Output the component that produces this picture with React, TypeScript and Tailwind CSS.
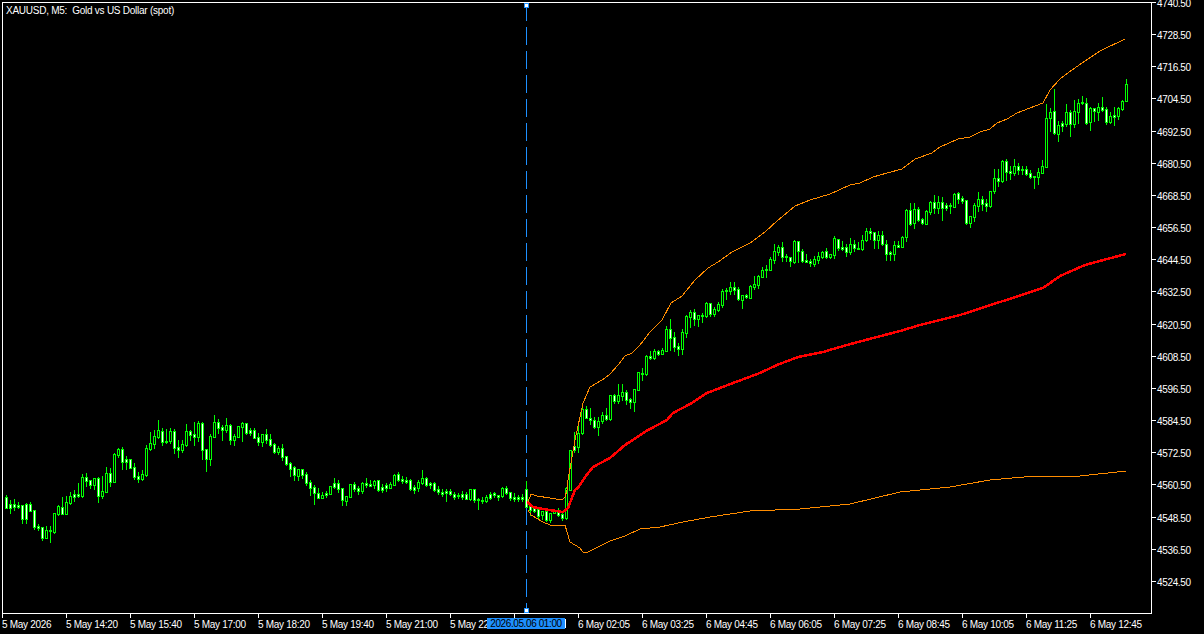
// MT5 style XAUUSD M5 chart: candles, one moving average and two envelope lines
// candle rows are [bodyTop, bodyBottom, wickTop, wickBottom, bearish] read off 3x crops, base + v / 3 = page y
type Row = [number, number, number, number, number];

const segments: { base: number; rows: Row[] }[] = [
  {
    base: 400,
    rows: [
      [292,323,285,323,1],[312,323,300,338,1],[312,320,297,330,1],[314,320,306,324,1],[316,356,316,368,1],[312,356,309,368,1],[312,332,306,332,1],[331,380,331,386,1],
      [378,384,372,390,1],[382,414,380,420,1],[390,414,378,414,0],[390,394,378,426,1],[340,396,340,399,0],[318,342,315,345,0],[320,341,291,341,1],[306,341,288,341,0],
      [288,308,276,312,0],[282,290,270,303,1],[282,288,249,290,1],[232,288,222,290,0],[232,242,219,258,1],[241,254,241,264,1],[235,255,235,267,0],[233,287,231,305,1],
      [274,288,228,294,0],[220,275,201,275,0],[220,246,204,258,1],[162,245,159,245,0],[148,164,144,170,0],[148,185,141,207,1],[178,185,168,207,1],[178,205,178,205,1],
      [202,230,189,237,1],[229,236,216,246,1],[223,237,210,240,0],[145,225,135,228,0],[130,148,96,151,0],[108,133,90,144,0],[91,112,60,115,0],[92,125,84,135,1],
      [123,127,87,129,1],[94,123,84,129,0],[94,143,87,159,1],[142,150,120,171,1],[133,150,120,156,0],[94,135,72,138,0],[94,104,90,120,1],[103,110,66,135,1],
      [70,110,63,123,0],[70,150,66,177,1],[148,177,148,213,1],[108,177,102,195,0],[67,110,45,110,0],[67,83,57,99,1],[82,90,75,120,1],[76,91,54,97,0],
      [76,120,72,132,1],[108,120,102,135,0],[79,112,79,112,0],[70,80,66,123,0],[70,99,69,102,1],[91,99,84,105,1],[91,113,84,113,1],[112,125,99,135,1],
      [102,126,102,138,0],[103,120,87,129,1],[118,134,102,138,1],[132,157,129,159,1],[145,157,138,162,0],[145,171,132,180,1],[169,192,169,195,1],[190,207,186,228,1],
      [202,225,198,240,1],[208,227,208,240,0],
    ],
  },
  {
    base: 450,
    rows: [
      [58,75,58,84,1],[72,98,66,105,1],[96,114,90,135,1],[112,129,105,162,1],[129,143,114,144,1],[135,143,126,144,0],[128,135,123,142,1],[108,132,108,132,0],
      [100,112,84,114,1],[100,116,90,126,1],[114,151,114,165,1],[139,153,139,165,0],[103,141,103,141,0],[102,117,96,123,1],[114,122,108,132,1],[99,124,96,129,0],
      [100,105,84,111,1],[103,108,90,108,1],[93,105,90,114,0],[91,119,90,123,1],[111,119,102,126,1],[105,113,99,123,1],[102,114,96,114,0],[76,105,72,105,0],
      [73,91,66,93,1],[88,94,78,99,1],[90,95,81,99,1],[90,118,87,120,1],[112,120,105,129,1],[96,113,90,123,0],[84,99,60,102,0],[84,104,81,108,1],
      [99,105,96,114,1],[99,120,96,123,1],[118,127,108,132,1],[126,132,117,138,1],[123,130,117,153,1],[122,133,117,135,1],[132,141,126,147,1],[135,138,129,144,1],
      [132,141,123,147,1],[133,146,126,147,1],[118,147,118,150,0],[118,150,117,156,1],[147,150,144,177,1],[149,153,141,159,1],[141,153,135,156,0],[132,143,126,147,1],
      [130,135,126,141,1],[136,141,135,150,1],[114,139,111,141,0],[115,129,108,132,1],[127,144,126,150,1],[140,148,129,153,1],[140,148,135,153,1],[140,148,132,153,1],
    ],
  },
  {
    base: 450,
    rows: [
      [117,170,93,172,1],[168,180,168,195,1],[171,183,168,186,1],[177,198,174,204,1],[183,195,183,207,0],[183,210,183,213,1],[189,210,189,216,0],[180,189,180,189,0],
      [183,195,174,198,1],[192,204,189,210,1],[114,204,111,207,0],
    ],
  },
  {
    base: 380,
    rows: [
      [210,330,210,330,0],[198,210,156,216,1],[159,201,129,216,0],[87,160,72,162,0],[87,114,78,114,1],[114,121,84,132,1],[121,141,111,144,1],[124,141,111,165,0],
      [106,124,96,129,0],[106,117,84,120,1],
    ],
  },
  {
    base: 220,
    rows: [
      [526,597,526,600,0],[526,543,522,549,1],[526,543,492,549,0],[515,528,492,540,0],[515,540,510,552,1],[538,545,534,564,1],[508,545,508,573,0],[456,510,456,510,0],
      [459,462,444,480,1],[408,463,405,465,0],[408,414,393,417,1],[393,414,387,417,0],[393,402,390,405,1],[390,402,384,402,0],[327,393,318,393,0],[327,354,297,390,1],
      [352,381,336,393,1],[378,387,369,405,1],[336,387,327,402,0],[288,338,285,351,0],[276,291,270,321,0],[276,297,267,315,1],[285,297,285,318,0],[285,288,279,306,1],
      [249,288,246,291,0],[249,282,249,288,1],[267,282,261,288,0],[252,270,246,273,0],[213,255,207,261,0],[210,213,204,237,1],[201,213,186,222,0],[201,210,186,222,1],
      [207,237,201,240,1],[225,239,225,264,0],[225,231,222,234,1],[198,233,195,234,0],[192,201,168,207,0],[168,194,165,204,0],[150,171,141,171,0],[147,151,135,171,1],
      [117,150,111,150,0],[93,120,72,129,0],[81,96,75,105,0],[81,110,66,123,1],[108,112,102,123,1],[112,124,111,138,1],[63,126,60,129,0],[63,94,63,126,1],
      [94,123,87,126,1],[120,125,102,126,1],[123,129,117,138,1],[118,132,108,138,0],[108,120,96,129,0],[96,111,93,114,0],[93,111,84,114,1],[102,111,102,114,0],
      [54,105,48,114,0],[57,84,57,90,1],[81,87,63,90,1],[81,96,72,108,1],[72,96,54,102,0],[72,84,60,93,1],[84,87,66,87,1],
    ],
  },
  {
    base: 70,
    rows: [
      [511,537,495,540,0],[484,511,475,514,0],[484,488,475,507,1],[487,511,487,534,1],[496,511,484,534,0],[496,523,484,526,1],[521,553,511,570,1],[547,553,544,570,1],
      [526,553,514,570,0],[526,530,514,532,1],[502,530,499,530,0],[420,502,417,514,0],[421,462,399,465,1],[418,460,399,474,0],[418,450,411,453,1],[448,460,444,462,1],
      [424,462,420,462,0],[396,426,393,432,0],[396,414,375,429,1],[396,414,378,429,0],[396,414,381,450,1],[406,414,399,420,1],[405,408,399,429,1],[372,410,369,411,0],
      [369,387,366,399,1],[384,393,378,399,1],[390,459,390,462,1],[438,459,438,471,0],[405,441,399,453,0],[387,408,366,423,0],[387,402,378,420,1],[399,408,387,423,1],
      [363,408,363,411,0],[324,363,297,369,0],[324,333,297,348,1],[274,333,270,336,0],[272,306,267,330,1],[303,309,288,327,1],[288,309,267,315,0],[288,300,279,312,1],
      [297,300,288,312,1],[297,312,288,315,1],[309,321,300,324,1],[318,321,318,354,1],[306,321,294,342,0],[288,309,270,309,0],[144,291,102,291,0],[126,144,114,183,0],
      [123,189,57,192,1],[165,192,153,213,0],[159,168,153,183,1],[126,162,102,168,0],[126,162,120,198,1],[123,162,90,171,0],[99,126,87,159,0],[96,100,78,102,1],
      [99,159,84,162,1],[114,156,111,180,0],[114,123,114,153,1],[111,126,99,150,0],[111,120,81,123,1],[117,156,111,162,1],[138,156,126,159,0],[135,141,111,165,1],
      [114,138,111,147,0],[93,117,90,120,0],[42,93,27,93,0],
    ],
  },
];

const candles = segments.flatMap((s) =>
  s.rows.map((r) => ({
    top: Math.round(s.base + r[0] / 3),
    bottom: Math.round(s.base + r[1] / 3),
    wickTop: Math.round(s.base + r[2] / 3),
    wickBottom: Math.round(s.base + r[3] / 3),
    bearish: r[4] === 1,
  })),
);

const upper =
  '528,502 531,494 537,496 550,498 562,500 565,497 567,490 568,480 575,440 580,417 583,403 590,387 597,383 605,378 610,374 618,365 625,356 632,353 640,345 650,332 662,320 671,303 682,296 695,280 708,268 718,262 732,252 750,243 765,232 777,221 795,206 810,200 830,194 850,185 860,183 873,177 887,173 902,169 915,159 932,153 940,147 958,139 970,137 980,132 990,129 997,123 1007,119 1017,113 1030,108 1043,103 1050,90 1060,79 1072,70 1085,61 1100,51 1125,39';
const lower =
  '528,510 531,515 543,522 550,525 565,525 570,542 580,548 583,552 588,552 600,546 610,541 625,536 640,529 660,527 683,522 710,517 750,511 800,509 850,504 900,492 950,487 990,480 1035,476 1080,476 1126,471';
const middle =
  '527,502 533,507 543,509 563,512 568,508 575,490 578,488 585,477 593,467 610,458 625,445 648,430 667,420 673,413 692,403 707,393 733,383 760,373 777,365 798,357 823,352 840,347 858,342 900,331 920,325 960,315 1000,302 1043,288 1060,276 1085,265 1107,259 1126,254';

const prices = ['4740.50','4728.50','4716.50','4704.50','4692.50','4680.50','4668.50','4656.50','4644.50','4632.50','4620.50','4608.50','4596.50','4584.50','4572.50','4560.50','4548.50','4536.50','4524.50'];

// 23:40 sits behind the crosshair date label, only its last pixel column shows
const times = ['5 May 2026','5 May 14:20','5 May 15:40','5 May 17:00','5 May 18:20','5 May 19:40','5 May 21:00','5 May 22','','6 May 02:05','6 May 03:25','6 May 04:45','6 May 06:05','6 May 07:25','6 May 08:45','6 May 10:05','6 May 11:25','6 May 12:45'];

function Chart() {
  return (
    <svg width="1204" height="634" viewBox="0 0 1204 634" shapeRendering="crispEdges" className="absolute top-0 left-0">
      <line x1="526.5" y1="3" x2="526.5" y2="612" stroke="#1e90ff" strokeWidth="1" strokeDasharray="18 6" />
      {candles.map((c, i) => {
        const x = 6 + i * 4;
        return (
          <g key={i}>
            <rect x={x} y={c.wickTop} width="1" height={c.wickBottom - c.wickTop + 1} fill="#00ff00" />
            <rect x={x - 1} y={c.top} width="3" height={c.bottom - c.top + 1} fill="#00ff00" />
            {c.bottom - c.top > 1 && (
              <rect x={x} y={c.top + 1} width="1" height={c.bottom - c.top - 1} fill={c.bearish ? '#ffffff' : '#000000'} />
            )}
          </g>
        );
      })}
      <polyline points={upper} fill="none" stroke="#ff8c00" strokeWidth="1" />
      <polyline points={lower} fill="none" stroke="#ff8c00" strokeWidth="1" />
      <polyline points={middle} fill="none" stroke="#ff0000" strokeWidth="2.5" />
      <rect x="524.5" y="3.5" width="4" height="4" fill="#ffffff" stroke="#1e90ff" />
      <rect x="524.5" y="608.5" width="4" height="4" fill="#ffffff" stroke="#1e90ff" />
    </svg>
  );
}

export default function App() {
  return (
    <div className="relative h-[634px] w-[1204px] overflow-hidden bg-black font-['Liberation_Sans',sans-serif] text-[10px] leading-none text-white">
      <div className="flex h-[614px] pt-[2px]">
        <div className="ml-[2px] h-[612px] w-[1149px] border-t border-b border-l border-white pt-[3px] pl-[3px]">
          <span className="tracking-[-0.25px] whitespace-pre">XAUUSD, M5:  Gold vs US Dollar (spot)</span>
        </div>
        <div className="flex h-[612px] flex-col border-l border-white">
          {prices.map((p) => (
            <div key={p} className="flex h-[32.17px] shrink-0 items-start">
              <span className="h-px w-[4px] bg-white" />
              <span className="-mt-[3px] ml-px tracking-[-0.35px]">{p}</span>
            </div>
          ))}
        </div>
      </div>
      <div className="relative flex pl-[2px]">
        {times.map((t, i) => (
          <div key={i} className="flex w-[64px] shrink-0 flex-col items-start">
            <span className="h-[4px] w-px bg-white" />
            {t ? (
              <span className="mt-[2px] whitespace-nowrap tracking-[-0.3px]">{t}</span>
            ) : (
              <span className="mt-[1px] ml-[51px] h-[9px] w-px bg-white" />
            )}
          </div>
        ))}
        <div className="absolute top-[4px] left-[487px] flex h-[11px] w-[78px] items-center justify-center bg-[#1e90ff] tracking-[-0.4px] text-black">
          2026.05.06 01:00
        </div>
      </div>
      <Chart />
    </div>
  );
}
